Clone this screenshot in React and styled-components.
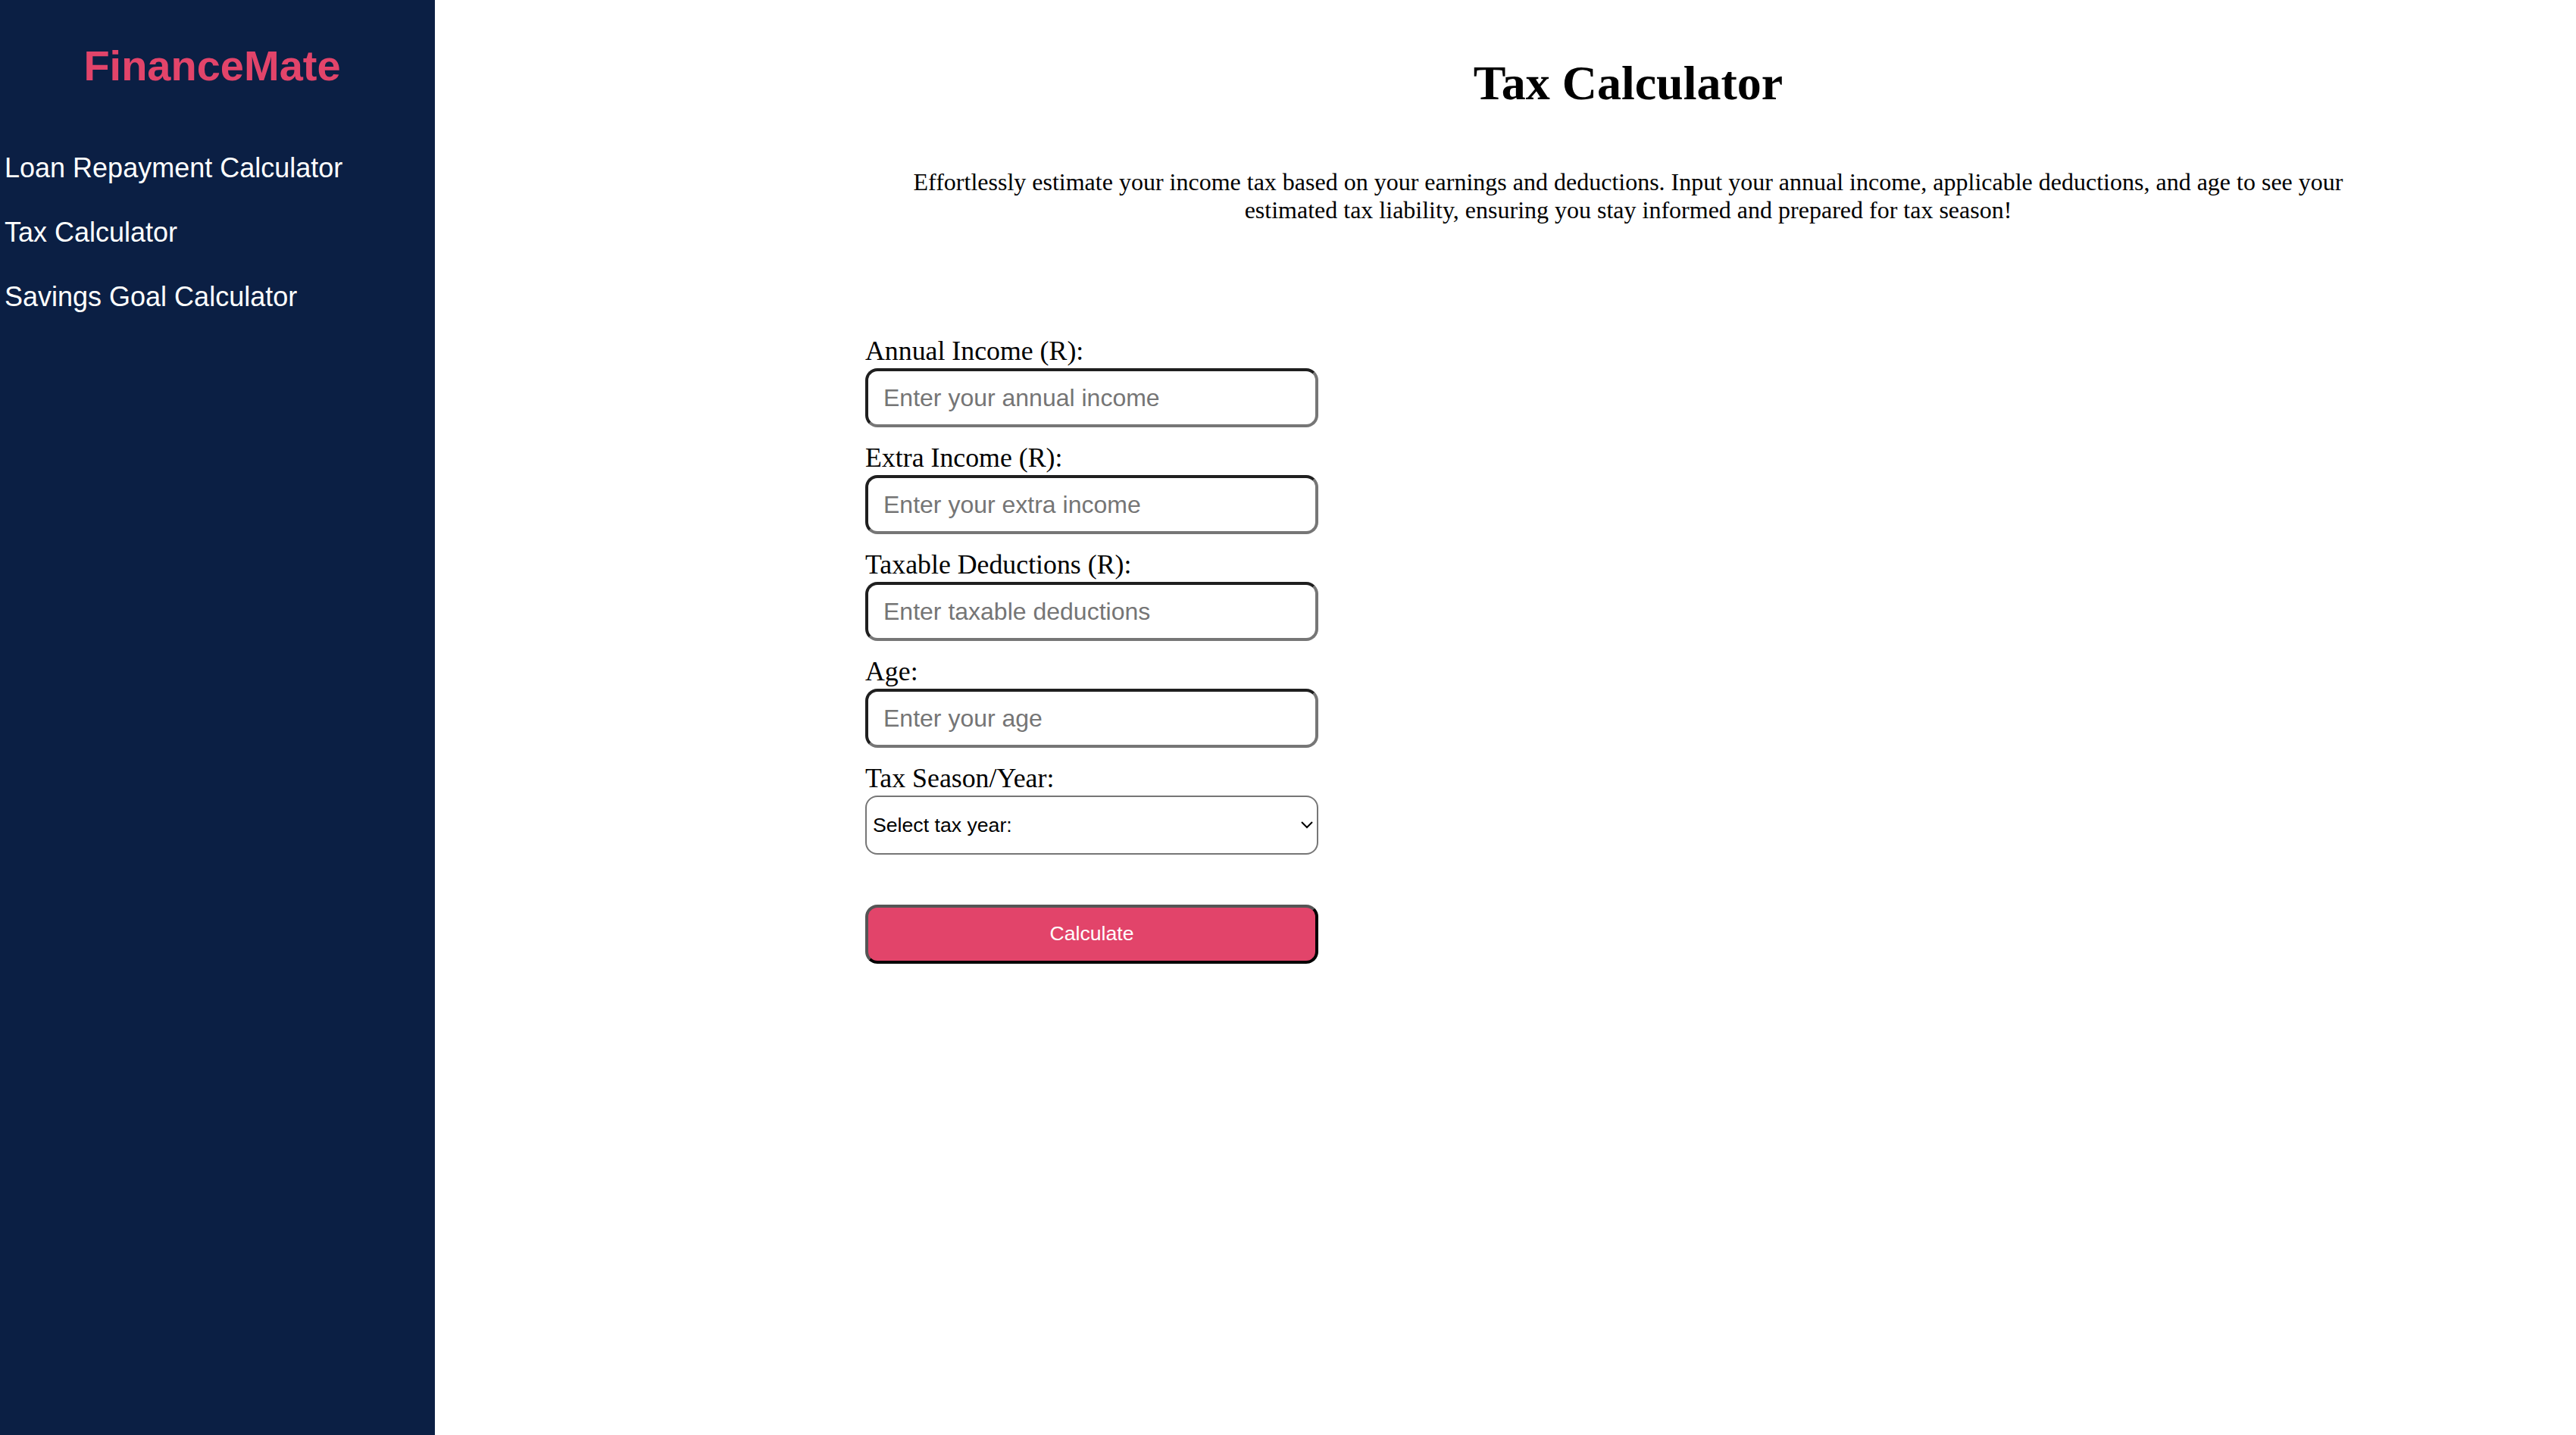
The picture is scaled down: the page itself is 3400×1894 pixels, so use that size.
import React from 'react';
import styled, { createGlobalStyle } from 'styled-components';

const GlobalStyle = createGlobalStyle`
  html, body {
    margin: 0;
    padding: 0;
    background: #ffffff;
  }
  * {
    box-sizing: border-box;
  }
`;

const Layout = styled.div`
  display: flex;
  min-height: 100vh;
`;

const Sidebar = styled.aside`
  width: 574px;
  flex-shrink: 0;
  background: #0b1f44;
  padding-top: 54px;
`;

const Logo = styled.h2`
  margin: 0;
  padding-right: 14px;
  text-align: center;
  font-family: "Liberation Sans", Arial, sans-serif;
  font-size: 56px;
  line-height: 66px;
  font-weight: bold;
  color: #e2446a;
`;

const Nav = styled.nav`
  display: flex;
  flex-direction: column;
  gap: 44px;
  margin-top: 81px;
  padding-left: 6px;
`;

const NavLink = styled.a`
  color: #ffffff;
  text-decoration: none;
  font-family: "Liberation Sans", Arial, sans-serif;
  font-size: 36px;
  line-height: 41px;
`;

const Main = styled.main`
  flex: 1;
  padding: 73px 0 0 324px;
  font-family: "Liberation Serif", "Times New Roman", serif;
  color: #000000;
`;

const Content = styled.div`
  width: 2014px;
  margin: 0 auto;
`;

const Title = styled.h1`
  margin: 0;
  text-align: center;
  font-size: 64px;
  line-height: 74px;
  font-weight: bold;
`;

const Description = styled.p`
  max-width: 2000px;
  margin: 75px auto 0;
  text-align: center;
  font-size: 32px;
  line-height: 37px;
`;

const Form = styled.form`
  width: 598px;
  margin-top: 147px;
  display: flex;
  flex-direction: column;
`;

const Field = styled.div`
  display: flex;
  flex-direction: column;
  margin-bottom: 20px;
`;

const Label = styled.label`
  display: block;
  font-size: 35.8px;
  line-height: 40px;
  margin-bottom: 3px;
`;

const Input = styled.input`
  width: 100%;
  height: 78px;
  padding: 0 20px;
  border: 4px solid;
  border-color: #1f1f1f #767676 #767676 #1f1f1f;
  border-radius: 16px;
  font-family: "Liberation Sans", Arial, sans-serif;
  font-size: 32px;
  color: #000000;
  background: #ffffff;
  outline: none;

  &::placeholder {
    color: #757575;
  }
`;

const SelectWrap = styled.div`
  position: relative;
  width: 100%;
`;

const Select = styled.select`
  width: 100%;
  height: 78px;
  padding: 0 40px 0 8px;
  border: 2px solid #767676;
  border-radius: 16px;
  font-family: "Liberation Sans", Arial, sans-serif;
  font-size: 26.67px;
  color: #000000;
  background: #ffffff;
  appearance: none;
  -webkit-appearance: none;
  outline: none;
`;

const Chevron = styled.svg`
  position: absolute;
  right: 6px;
  top: 50%;
  transform: translateY(-50%);
  pointer-events: none;
`;

const Button = styled.button`
  width: 100%;
  height: 78px;
  margin-top: 46px;
  border: 4px solid;
  border-color: #555555 #000000 #000000 #555555;
  border-radius: 16px;
  background: #e2446a;
  color: #ffffff;
  font-family: "Liberation Sans", Arial, sans-serif;
  font-size: 26.67px;
  line-height: 1;
  padding: 0 0 2px;
  cursor: pointer;
`;

const fields = [
  { id: 'annual', label: 'Annual Income (R):', placeholder: 'Enter your annual income' },
  { id: 'extra', label: 'Extra Income (R):', placeholder: 'Enter your extra income' },
  { id: 'deductions', label: 'Taxable Deductions (R):', placeholder: 'Enter taxable deductions' },
  { id: 'age', label: 'Age:', placeholder: 'Enter your age' },
];

function App() {
  return (
    <>
      <GlobalStyle />
      <Layout>
        <Sidebar>
          <Logo>FinanceMate</Logo>
          <Nav>
            <NavLink href="#">Loan Repayment Calculator</NavLink>
            <NavLink href="#">Tax Calculator</NavLink>
            <NavLink href="#">Savings Goal Calculator</NavLink>
          </Nav>
        </Sidebar>
        <Main>
          <Content>
            <Title>Tax Calculator</Title>
            <Description>
              Effortlessly estimate your income tax based on your earnings and deductions. Input your annual
              income, applicable deductions, and age to see your estimated tax liability, ensuring you stay
              informed and prepared for tax season!
            </Description>
            <Form onSubmit={(e) => e.preventDefault()}>
              {fields.map((f) => (
                <Field key={f.id}>
                  <Label htmlFor={f.id}>{f.label}</Label>
                  <Input id={f.id} type="number" placeholder={f.placeholder} />
                </Field>
              ))}
              <Field>
                <Label htmlFor="year">Tax Season/Year:</Label>
                <SelectWrap>
                  <Select id="year" defaultValue="">
                    <option value="">Select tax year:</option>
                    <option value="2024">2024/2025</option>
                    <option value="2023">2023/2024</option>
                  </Select>
                  <Chevron width="18" height="12" viewBox="0 0 18 12">
                    <path d="M2 2 L9 9 L16 2" fill="none" stroke="#000" strokeWidth="2" />
                  </Chevron>
                </SelectWrap>
              </Field>
              <Button type="submit">Calculate</Button>
            </Form>
          </Content>
        </Main>
      </Layout>
    </>
  );
}

export default App;
